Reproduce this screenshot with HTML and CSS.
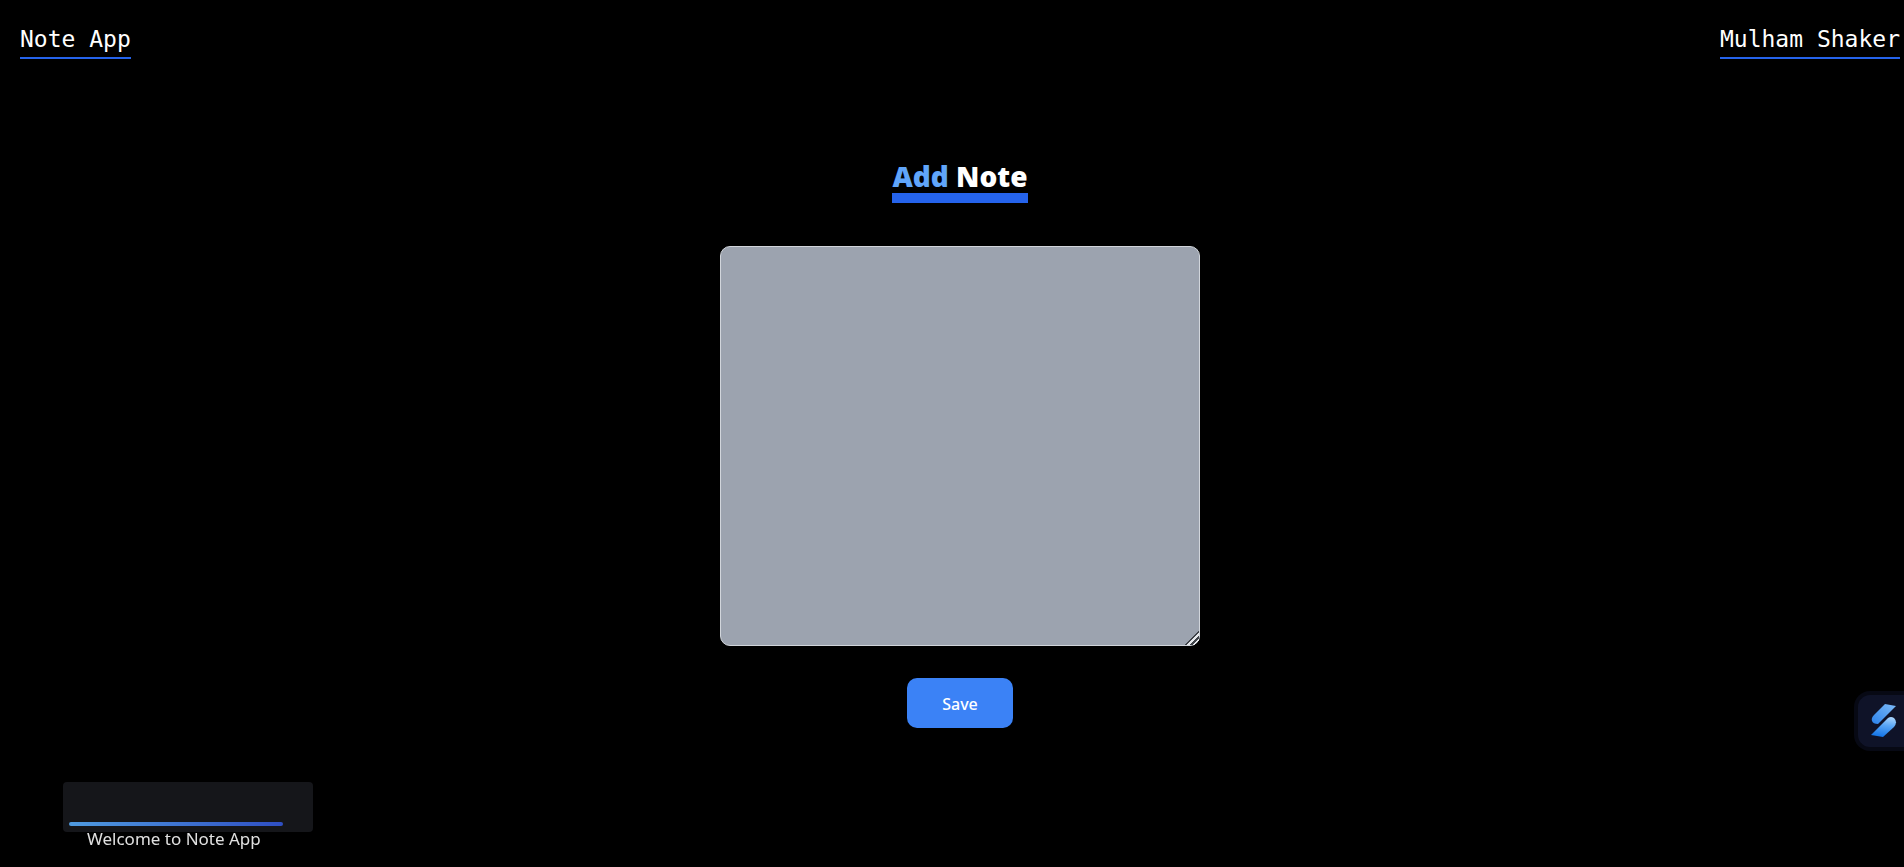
FILE: index.html
```html
<!DOCTYPE html>
<html lang="en">
<head>
<meta charset="utf-8">
<title>Note App</title>
<link rel="stylesheet" href="styles.css">
</head>
<body>
<header class="topbar">
  <a class="topbar-link" href="#">Note App</a>
  <a class="topbar-link" href="#">Mulham Shaker</a>
</header>
<main class="editor">
  <h1 class="title" id="note-title"><span class="title-part title-accent">Add&nbsp;</span><span class="title-part">Note</span></h1>
  <textarea class="note" aria-labelledby="note-title"></textarea>
  <button class="save" type="button">Save</button>
</main>
<button class="widget" type="button" aria-label="Open assistant">
  <svg class="widget-logo" viewBox="0 0 26 34" aria-hidden="true">
    <defs>
      <linearGradient id="upper" x1="1" y1="0" x2="0" y2="1"><stop offset="0" stop-color="#7dbbf8"/><stop offset="1" stop-color="#2b82ea"/></linearGradient>
      <linearGradient id="lower" x1="0.6" y1="0" x2="0.4" y2="1"><stop offset="0" stop-color="#a5d2fc"/><stop offset="0.4" stop-color="#5aa6f5"/><stop offset="1" stop-color="#1273e6"/></linearGradient>
    </defs>
    <path fill="url(#upper)" d="M14 0 L25 2 L7 20 Q2 20 1 17 Q0 14 3 11 Z"/>
    <path fill="url(#lower)" d="M17 14 Q20 12 23 14 Q27 18 23 23 L12 33 L0 31 Z"/>
  </svg>
</button>
<aside class="toast" role="status">
  <div class="toast-progress"></div>
  <span class="toast-text">Welcome to Note App</span>
</aside>
</body>
</html>
```

FILE: styles.css
```css
* {
  box-sizing: border-box;
}

body {
  margin: 0;
  min-height: 100vh;
  overflow: hidden;
  background: #000;
  color: #fff;
  font-family: "Noto Sans", sans-serif;
}

.topbar {
  display: flex;
  justify-content: space-between;
  padding: 24px 4px 0 20px;
}

.topbar-link {
  padding-bottom: 2px;
  border-bottom: 2px solid #2563eb;
  color: #fff;
  font-family: "DejaVu Sans Mono", monospace;
  font-size: 23px;
  line-height: 31px;
  text-decoration: none;
}

.editor {
  display: flex;
  flex-direction: column;
  align-items: center;
  padding: 99px 0 0 16px;
}

.title {
  display: flex;
  margin: 0 0 43px;
  font-family: "Open Sans", "Noto Sans", sans-serif;
  font-size: 28px;
  font-weight: 800;
  line-height: 36px;
}

.title-part {
  height: 45px;
  border-bottom: 10px solid #2563eb;
}

.title-accent {
  color: #60a5fa;
}

.note {
  width: 480px;
  height: 400px;
  padding: 12px;
  border: 1px solid #d1d5db;
  border-radius: 10px;
  background: #9ca3af;
  font: inherit;
  resize: both;
}

.note::-webkit-resizer {
  background: linear-gradient(135deg, transparent 52%, #3f4349 52% 60%, #e5e7eb 60% 70%, #3f4349 70% 78%, #e5e7eb 78% 86%, transparent 86%);
}

.save {
  margin-top: 32px;
  padding: 13px 35px 11px;
  border: 0;
  border-radius: 10px;
  background: #3b82f6;
  color: #fff;
  font-family: inherit;
  font-size: 16px;
  font-weight: 500;
  line-height: 26px;
}

.widget {
  position: fixed;
  right: 0;
  top: 691px;
  display: flex;
  align-items: center;
  width: 50px;
  height: 60px;
  padding: 0 0 0 13px;
  border: 4px solid #070914;
  border-right: 0;
  border-radius: 16px 0 0 16px;
  background: #0f1328;
}

.widget-logo {
  width: 26px;
  height: 34px;
}

.toast {
  position: fixed;
  left: 63px;
  bottom: 35px;
  width: 250px;
  height: 50px;
  padding: 40px 6px 0;
  border-radius: 4px;
  background: #15161a;
}

.toast-progress {
  width: 214px;
  height: 4px;
  border-radius: 2px;
  background: linear-gradient(90deg, #4f9be0, #2f4fc4);
}

.toast-text {
  display: block;
  padding-left: 18px;
  color: #e0e0e0;
  font-size: 17px;
  line-height: 26px;
  white-space: nowrap;
}
```
